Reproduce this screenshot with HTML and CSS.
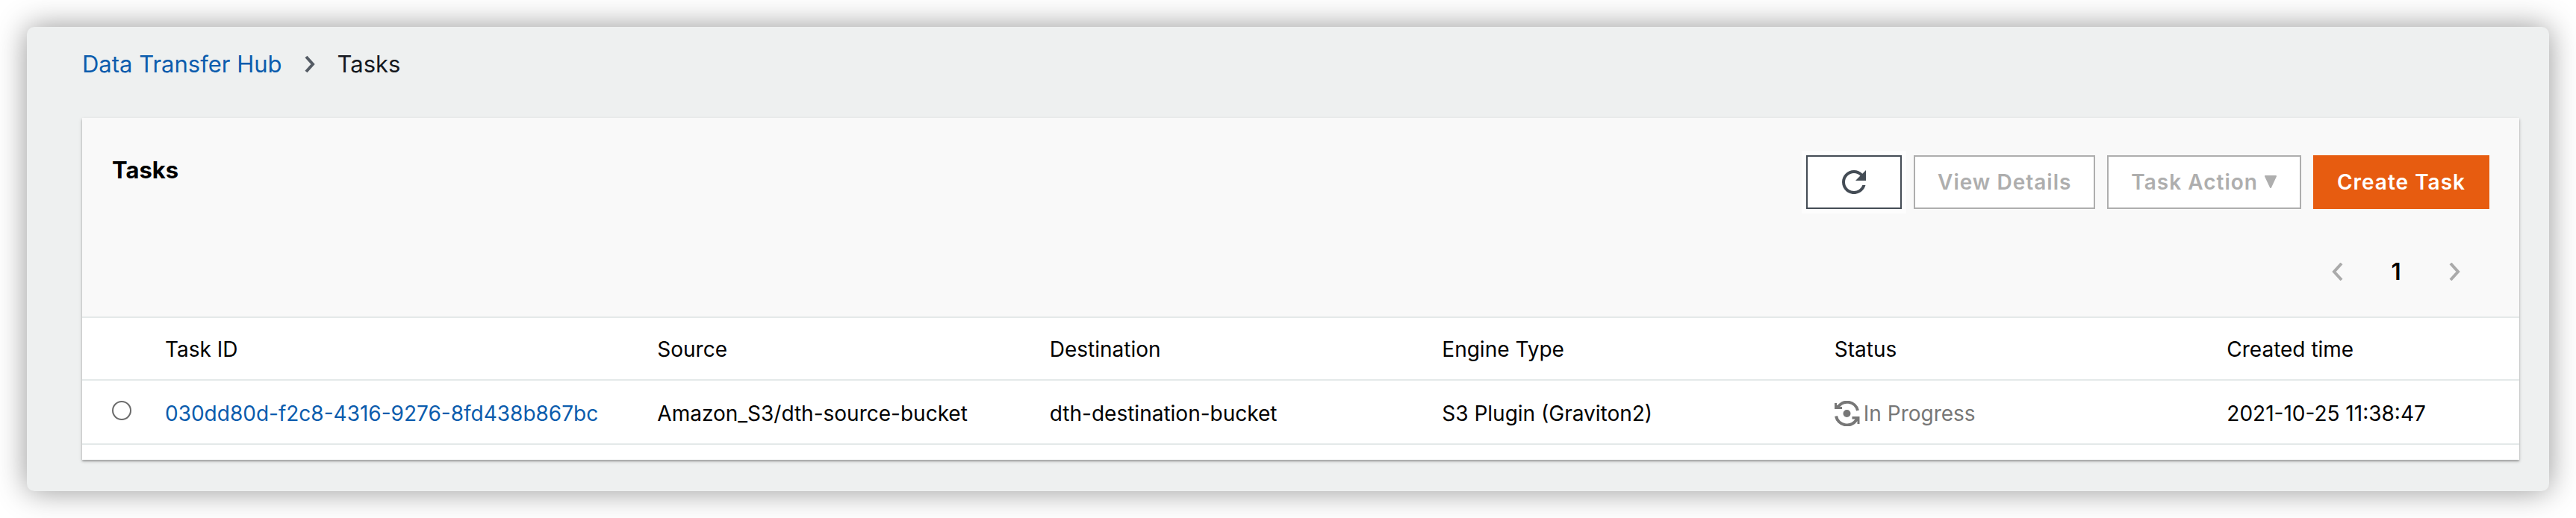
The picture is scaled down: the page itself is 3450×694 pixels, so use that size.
FILE: index.html
```html
<!DOCTYPE html>
<html lang="en">
<head>
<meta charset="utf-8">
<meta name="viewport" content="width=device-width, initial-scale=1">
<title>Data Transfer Hub - Tasks</title>
<link rel="stylesheet" href="styles.css">
</head>
<body>
<main class="window">
  <nav class="breadcrumb" aria-label="Breadcrumb">
    <a class="link" href="#">Data Transfer Hub</a>
    <svg class="breadcrumb-arrow" viewBox="0 0 14 24" aria-hidden="true"><path d="M2 2l9 10-9 10"/></svg>
    <span>Tasks</span>
  </nav>
  <section class="card">
    <header class="card-header">
      <div class="toolbar">
        <h1 class="title">Tasks</h1>
        <div class="actions">
          <button class="btn btn-refresh" type="button" aria-label="Refresh">
            <svg class="refresh-icon" viewBox="4 4 16 16" aria-hidden="true"><path d="M17.65 6.35C16.2 4.9 14.21 4 12 4c-4.42 0-7.99 3.58-7.99 8s3.57 8 7.99 8c3.73 0 6.84-2.55 7.73-6h-2.08c-.82 2.33-3.04 4-5.65 4-3.31 0-6-2.69-6-6s2.69-6 6-6c1.66 0 3.14.69 4.22 1.78L13 11h7V4l-2.35 2.35z"/></svg>
          </button>
          <button class="btn" type="button" disabled>View Details</button>
          <button class="btn" type="button" disabled>Task Action
            <svg class="caret" viewBox="0 0 18 18" aria-hidden="true"><path d="M2 1h14L9 16z"/></svg>
          </button>
          <button class="btn btn-primary" type="button">Create Task</button>
        </div>
      </div>
      <nav class="pagination" aria-label="Pagination">
        <button class="page-btn" type="button" aria-label="Previous page" disabled><svg class="page-arrow" viewBox="0 0 16 24" aria-hidden="true"><path d="M13 1L3 12l10 11"/></svg></button>
        <button class="page-btn page-current" type="button" aria-current="page">1</button>
        <button class="page-btn" type="button" aria-label="Next page" disabled><svg class="page-arrow" viewBox="0 0 16 24" aria-hidden="true"><path d="M3 1l10 11L3 23"/></svg></button>
      </nav>
    </header>
    <table class="tasks">
      <colgroup>
        <col class="col-select"><col class="col-id"><col class="col-data"><col class="col-data"><col class="col-data"><col class="col-data"><col>
      </colgroup>
      <thead>
        <tr>
          <td></td>
          <th scope="col">Task ID</th>
          <th scope="col">Source</th>
          <th scope="col">Destination</th>
          <th scope="col">Engine Type</th>
          <th scope="col">Status</th>
          <th scope="col">Created time</th>
        </tr>
      </thead>
      <tbody>
        <tr>
          <td class="select-cell"><input class="radio" type="radio" name="task" aria-labelledby="task-1"></td>
          <td><a class="link" id="task-1" href="#">030dd80d-f2c8-4316-9276-8fd438b867bc</a></td>
          <td>Amazon_S3/dth-source-bucket</td>
          <td>dth-destination-bucket</td>
          <td>S3 Plugin (Graviton2)</td>
          <td>
            <span class="status">
              <svg class="status-icon" viewBox="0 0 34 34" aria-hidden="true">
                <circle cx="16.5" cy="17" r="5"/>
                <path class="arc" d="M4 9.500A14.500 14.500 0 0 1 31 13M2 20.500A15 15 0 0 0 29 26"/>
                <path d="M0 3h3v3l4-1-1 3h4v3H0zM33.500 31h-3v-4l-4 2 1-4.500h-4V21h10z"/>
              </svg>
              In Progress
            </span>
          </td>
          <td>2021-10-25 11:38:47</td>
        </tr>
      </tbody>
    </table>
  </section>
</main>
</body>
</html>
```
FILE: styles.css
```css
* {
  box-sizing: border-box;
}

body {
  margin: 0;
  padding: 36px;
  background: #fff;
  color: #000;
  font-family: Inter, "Liberation Sans", sans-serif;
  font-size: 28px;
  line-height: 40px;
}

.window {
  padding: 30px 40px 42px 74px;
  border-radius: 10px;
  background: #eef0f0;
  box-shadow: 0 0 40px rgba(0, 0, 0, 0.42);
}

.link {
  color: #0b5cad;
  text-decoration: none;
}

.breadcrumb {
  display: flex;
  align-items: center;
  margin-bottom: 52px;
  color: #16191f;
  font-size: 31px;
}

.breadcrumb-arrow {
  width: 14px;
  height: 24px;
  margin: 0 30px;
  fill: none;
  stroke: #545b64;
  stroke-width: 4;
}

.card {
  padding-bottom: 20px;
  background: #fff;
  box-shadow: 0 2px 4px rgba(0, 0, 0, 0.25), 0 2px 2px rgba(0, 0, 0, 0.15);
}

.card-header {
  padding: 50px 40px 40px;
  border-bottom: 2px solid #e4e9e9;
  background: #f9f9f9;
}

.toolbar {
  display: flex;
  justify-content: space-between;
  align-items: flex-start;
}

.title {
  margin: 0;
  font-size: 31px;
  line-height: 40px;
  font-weight: 700;
}

.actions {
  display: flex;
  gap: 16px;
}

.btn {
  display: flex;
  align-items: center;
  gap: 8px;
  height: 72px;
  padding: 0 30px;
  border: 2px solid #aeaeae;
  background: #fff;
  color: #aeaeae;
  font: 600 28px/40px Inter, "Liberation Sans", sans-serif;
  letter-spacing: 1px;
}

.btn-refresh {
  justify-content: center;
  width: 128px;
  border-color: #444c55;
  box-shadow: 0 0 0 6px #fdfdfd;
}

.refresh-icon {
  width: 32px;
  height: 32px;
  fill: #444c55;
}

.caret {
  width: 18px;
  height: 18px;
  fill: #aeaeae;
  stroke: #aeaeae;
  stroke-width: 2;
  stroke-linejoin: round;
}

.btn-primary {
  border-color: #e75c10;
  background: #e75c10;
  color: #fff;
}

.pagination {
  display: flex;
  justify-content: flex-end;
  gap: 8px;
  margin-top: 64px;
  padding-right: 12px;
}

.page-btn {
  display: flex;
  justify-content: center;
  align-items: center;
  width: 70px;
  height: 40px;
  padding: 0;
  border: 0;
  background: none;
  color: #000;
  font: 600 31px/40px Inter, "Liberation Sans", sans-serif;
}

.page-arrow {
  width: 16px;
  height: 24px;
  fill: none;
  stroke: #aaa;
  stroke-width: 4;
}

.tasks {
  width: 100%;
  table-layout: fixed;
  border-collapse: separate;
  border-spacing: 0;
}

.tasks th,
.tasks td {
  padding: 22px 20px 20px;
  border-bottom: 2px solid #e4e9e9;
  font-weight: 400;
  text-align: left;
  white-space: nowrap;
}

.tasks tbody td {
  padding: 24px 20px 20px;
}

.col-select {
  width: 91px;
}

.col-id {
  width: 20.2%;
}

.col-data {
  width: 16.1%;
}

.tasks tbody .select-cell {
  padding: 0 0 4px 40px;
}

.radio {
  display: block;
  appearance: none;
  width: 26px;
  height: 26px;
  margin: 0;
  border: 2px solid #6b6b6b;
  border-radius: 50%;
  background: #fff;
}

.radio:checked {
  border-width: 8px;
}

.status {
  display: flex;
  align-items: center;
  gap: 5px;
  color: #777;
}

.status-icon {
  width: 34px;
  height: 34px;
  fill: #777;
}

.arc {
  fill: none;
  stroke: #777;
  stroke-width: 4;
}
```
